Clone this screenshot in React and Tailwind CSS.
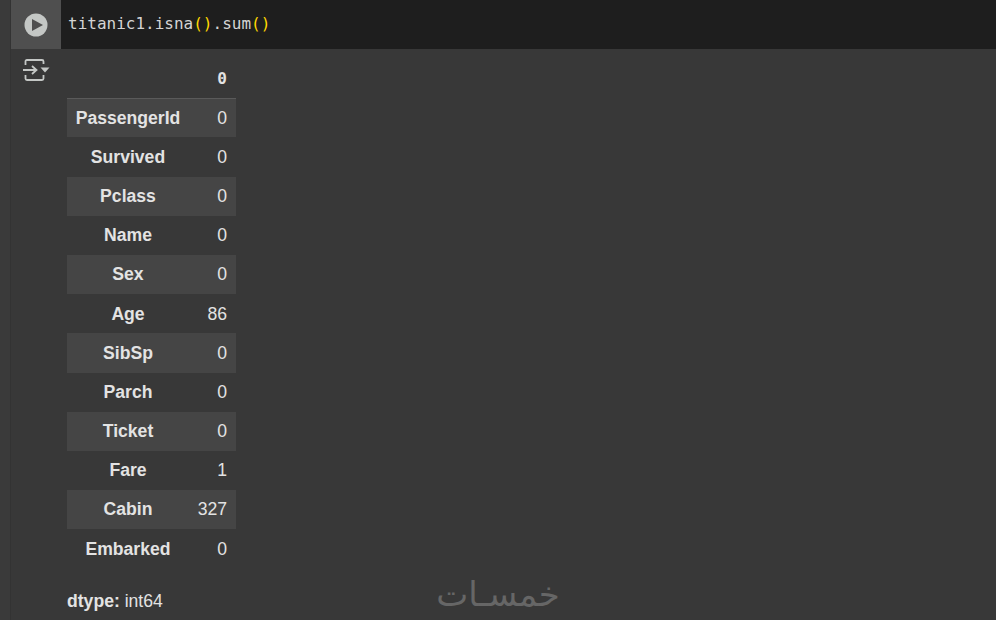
import React from 'react'

const rows = [
  ['PassengerId', 0],
  ['Survived', 0],
  ['Pclass', 0],
  ['Name', 0],
  ['Sex', 0],
  ['Age', 86],
  ['SibSp', 0],
  ['Parch', 0],
  ['Ticket', 0],
  ['Fare', 1],
  ['Cabin', 327],
  ['Embarked', 0],
]

const RunIcon = () => (
  <svg width="24" height="24" viewBox="0 0 24 24">
    <circle cx="12" cy="12" r="11.5" fill="#c4c7c5" />
    <path d="M8 6 L19 12 L8 18 Z" fill="#4f4f4f" />
  </svg>
)

const OutputIcon = () => (
  <svg width="27" height="22" viewBox="0 0 27 22" fill="none" stroke="#c4c7c5" strokeWidth="1.8">
    <path d="M2.5 6 V2.5 Q2.5 1 4 1 H19 Q20.5 1 20.5 2.5 V5" />
    <path d="M2.5 16 V19.5 Q2.5 21 4 21 H19 Q20.5 21 20.5 19.5 V16" />
    <path d="M0 11 H13 M9 7 L13.5 11 L9 15" />
    <path d="M17.5 8.5 H26.5 L22 13.5 Z" fill="#c4c7c5" stroke="none" />
  </svg>
)

const App = () => {
  return (
    <div className="relative flex h-[620px] w-[996px] overflow-hidden bg-[#383838] font-['Liberation_Sans',Arial,sans-serif]">
      <div className="w-[11px] shrink-0 border-r border-[#333333] bg-[#3a3a3a]" />
      <div className="min-w-0 flex-1">
        <div className="flex h-[49px] bg-[#1e1e1e]">
          <div className="flex w-[50px] shrink-0 items-center justify-center bg-[#4f4f4f]">
            <RunIcon />
          </div>
          <div className="pl-[7px] pt-[13px] font-['DejaVu_Sans_Mono',monospace] text-[16px] leading-[22px] text-[#d4d4d4]">
            titanic1.isna<span className="text-[#ffd700]">()</span>.sum<span className="text-[#ffd700]">()</span>
          </div>
        </div>
        <div className="flex">
          <div className="w-[56px] shrink-0 pl-[12px] pt-[10px]">
            <OutputIcon />
          </div>
          <div className="pt-[11px]">
            <table className="w-[169px] border-collapse text-[17.6px] text-[#e3e3e3]">
              <thead>
                <tr className="h-[38.2px] border-b border-[#5a5a5a]">
                  <th />
                  <th className="pr-[9px] text-right font-['DejaVu_Sans_Mono',monospace] text-[16px] font-bold">0</th>
                </tr>
              </thead>
              <tbody>
                {rows.map(([name, value], i) => (
                  <tr key={name} className={i % 2 === 0 ? 'h-[39.2px] bg-[#454545]' : 'h-[39.2px]'}>
                    <th className="w-[122px] text-center font-bold">{name}</th>
                    <td className="pr-[9px] text-right">{value}</td>
                  </tr>
                ))}
              </tbody>
            </table>
            <p className="mt-[21px] text-[17.6px] leading-[24px] text-[#e3e3e3]">
              <b>dtype:</b> int64
            </p>
          </div>
        </div>
      </div>
      <div dir="rtl" className="absolute left-[436px] top-[570px] w-[124px] text-center font-['DejaVu_Sans',sans-serif] text-[34px] leading-[48px] text-[#666666]">
        خمسـات
      </div>
    </div>
  )
}

export default App
